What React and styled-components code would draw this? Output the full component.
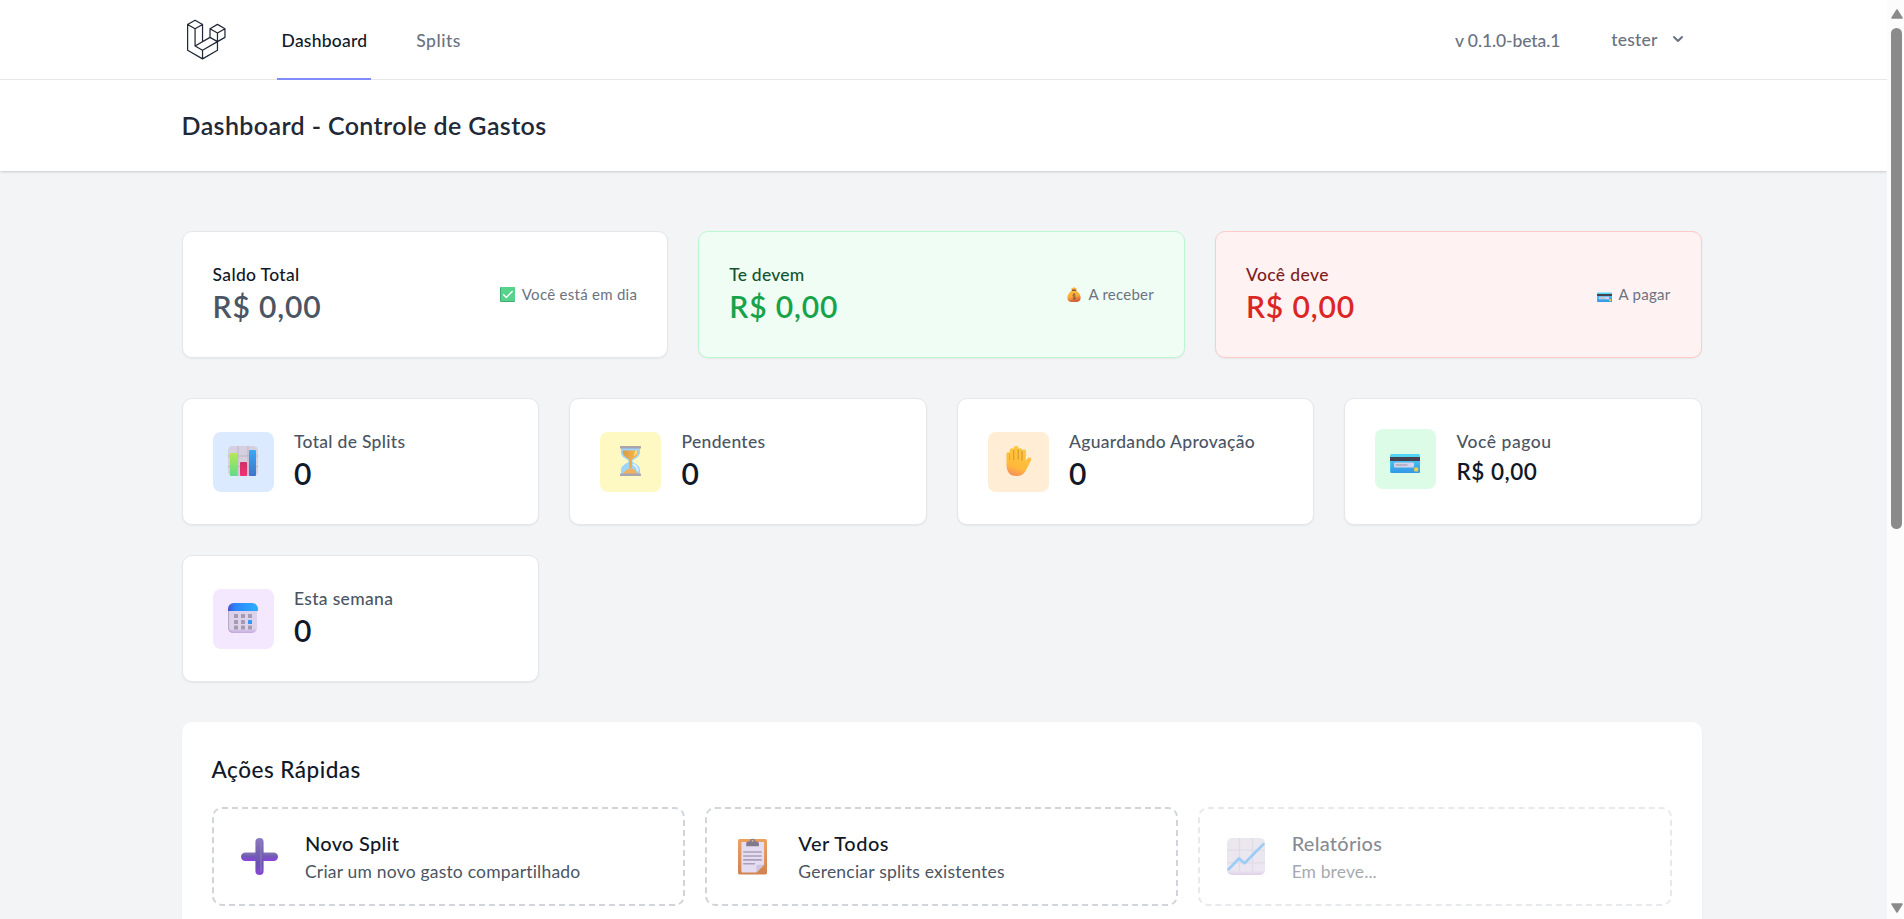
import React from "react";
import styled, { createGlobalStyle, css } from "styled-components";

const GlobalStyle = createGlobalStyle`
  *, *::before, *::after { box-sizing: border-box; }
  html, body { margin: 0; padding: 0; height: 100%; overflow: hidden; }
  body {
    background: #f3f4f6;
    font-family: Lato, "Open Sans", "Liberation Sans", sans-serif;
    color: #111827;
  }
  svg { display: block; flex: none; }
`;

/* size, line box and tracking of one line of text; lift raises it in its line box */
const type = (size, line, weight, lift = 0) => css`
  font-size: ${size}px;
  line-height: ${line - lift * 2}px;
  padding-bottom: ${lift * 2}px;
  font-weight: ${weight};
  letter-spacing: ${(p) => p.$track || 0}px;
  white-space: nowrap;
`;

const Screen = styled.div`
  display: flex;
  height: 919px;
  overflow: hidden;
`;

const Page = styled.div`
  width: 1887px;
  flex: none;
  overflow: hidden;
`;

const Container = styled.div`
  width: 1600px;
  margin-left: 141.6px;
  padding: 0 40px;
`;

const Nav = styled.nav`
  height: 80px;
  background: #fff;
  border-bottom: 1px solid #ececef;
`;

const NavRow = styled(Container)`
  display: flex;
  justify-content: space-between;
  height: 80px;
`;

const NavStart = styled.div`
  display: flex;
  gap: 40px;
`;

const Brand = styled.a`
  display: flex;
  width: 45px;
  margin-right: 10px;
  padding-top: 17px;
`;

const NavLink = styled.a`
  display: flex;
  align-items: center;
  padding: 3px 4px 0 5px;
  color: ${(p) => (p.$active ? "#111827" : "#6b7280")};
  border-bottom: 2px solid ${(p) => (p.$active ? "#818cf8" : "transparent")};
`;

const NavText = styled.span`
  ${type(17.5, 25, 500)}
`;

const NavEnd = styled.div`
  display: flex;
  align-items: center;
  padding-right: 14px;
  color: #6b7280;
`;

const UserButton = styled.div`
  display: flex;
  align-items: center;
  gap: 10px;
  margin: 0 0 2px 51px;
`;

const PageHeader = styled.header`
  height: 91.25px;
  padding: 30px 0;
  background: #fff;
  box-shadow: 0 1px 3px rgba(0, 0, 0, 0.13), 0 1px 2px -1px rgba(0, 0, 0, 0.13);
`;

const PageTitle = styled.h2`
  margin: 0;
  color: #1f2937;
  ${type(25, 31.25, 600)}
`;

const Main = styled.main`
  padding-top: 60px;
`;

const Grid = styled.div`
  display: grid;
  grid-template-columns: repeat(${(p) => p.$columns}, 1fr);
  gap: ${(p) => p.$gap || 30}px;
  margin-bottom: 40px;
`;

const tones = {
  plain: { bg: "#ffffff", line: "#e5e7eb", label: "#111827", value: "#4b5563" },
  green: { bg: "#f0fdf4", line: "#bbf7d0", label: "#14532d", value: "#16a34a" },
  red: { bg: "#fef2f2", line: "#fecaca", label: "#7f1d1d", value: "#dc2626" },
};

const Card = styled.div`
  height: 127px;
  padding: 30px;
  background: ${(p) => tones[p.$tone || "plain"].bg};
  border: 1px solid ${(p) => tones[p.$tone || "plain"].line};
  border-radius: 10px;
  box-shadow: 0 1px 2px rgba(0, 0, 0, 0.06);
`;

const BalanceRow = styled.div`
  display: flex;
  align-items: center;
  justify-content: space-between;
`;

const BalanceLabel = styled.div`
  color: ${(p) => tones[p.$tone].label};
  ${type(17.5, 25, 500)}
`;

const BalanceValue = styled.div`
  color: ${(p) => tones[p.$tone].value};
  ${type(30, 40, 600, 1)}
`;

const Note = styled.div`
  display: flex;
  align-items: center;
  gap: 7px;
  color: #6b7280;
`;

const NoteText = styled.span`
  ${type(15, 20, 400, 0.5)}
`;

const StatRow = styled.div`
  display: flex;
  align-items: center;
  gap: 20.4px;
`;

const StatIcon = styled.div`
  display: flex;
  align-items: flex-start;
  width: 61px;
  height: 60px;
  padding: 14px 15px;
  background: ${(p) => p.$bg};
  border-radius: 8px;
`;

const StatLabel = styled.div`
  color: #4b5563;
  ${type(17.5, 25, 500)}
`;

const StatValue = styled.div`
  ${type(30, 40, 600, 1)}
`;

const StatMoney = styled.div`
  ${type(22.5, 35, 600)}
`;

const Panel = styled.section`
  height: 400px;
  padding: 30px;
  background: #fff;
  border-radius: 10px;
  box-shadow: 0 1px 2px rgba(0, 0, 0, 0.05);
`;

const PanelTitle = styled.h3`
  margin: 0 0 20px;
  ${type(22.5, 35, 500)}
`;

const Action = styled.a`
  display: flex;
  align-items: center;
  height: 99px;
  padding: 20px;
  border: 2px dashed #d1d5db;
  border-radius: 10px;
  opacity: ${(p) => (p.$disabled ? 0.5 : 1)};
`;

const ActionIcon = styled.div`
  display: flex;
  justify-content: center;
  width: 51px;
  margin: 0 20.4px 1px 0;
`;

const ActionTitle = styled.div`
  ${type(20, 30, 500, 0.75)}
`;

const ActionText = styled.div`
  color: #4b5563;
  ${type(17.5, 25, 400)}
`;

const Scrollbar = styled.div`
  display: flex;
  flex-direction: column;
  align-items: center;
  width: 17px;
  height: 919px;
  padding: 9px 0 6px 2px;
  background: #fcfcfc;
`;

const Thumb = styled.div`
  width: 11px;
  height: 501px;
  margin: 9px 0 auto;
  border-radius: 6px;
  background: #8b8b8b;
`;

const Arrow = styled.svg`
  width: 12px;
  height: 10px;
  transform: ${(p) => (p.$down ? "rotate(180deg)" : "none")};
`;

function Logo() {
  return (
    <svg width="45" height="45" viewBox="0 0 316 316" fill="none" stroke="#1f2937" strokeWidth="8.7" strokeLinejoin="round" strokeLinecap="round">
      <path d="M39.4 52.5 91.8 22.2 144.2 52.5 91.8 82.7ZM39.4 52.5V233.6L144.2 294 249.1 233.6V112.5M91.8 82.7V203.4L144.2 233.6V294M144.2 233.6 249.1 173.1M144.2 52.5V173.1M91.8 203.4 196.7 142.9 249.1 173.1 301.6 142.9V82.3L249.1 52 196.7 82.3V142.9M196.7 82.3 249.1 112.5 301.6 82.3" />
    </svg>
  );
}

function Chevron() {
  return (
    <svg width="20" height="20" viewBox="0 0 20 20" fill="#6b7280">
      <path fillRule="evenodd" clipRule="evenodd" d="M5.293 7.293a1 1 0 011.414 0L10 10.586l3.293-3.293a1 1 0 111.414 1.414l-4 4a1 1 0 01-1.414 0l-4-4a1 1 0 010-1.414z" />
    </svg>
  );
}

function Check() {
  return (
    <svg width="15" height="15" viewBox="0 0 15 15">
      <rect width="15" height="15" rx="1" fill="#43aa74" />
      <rect x="1" width="14" height="14" rx="1" fill="#58d38b" />
      <path d="M3.6 7.7 6.3 10.4 12.2 4.4" fill="none" stroke="#fff" strokeWidth="1.4" strokeLinecap="round" strokeLinejoin="round" />
    </svg>
  );
}

function MoneyBag() {
  return (
    <svg width="14" height="15" viewBox="0 0 14 15">
      <defs>
        <linearGradient id="bag" x1="0" y1="0" x2="0.3" y2="1">
          <stop offset="0" stopColor="#ffc233" />
          <stop offset="0.6" stopColor="#f7a93c" />
          <stop offset="1" stopColor="#d9603a" />
        </linearGradient>
      </defs>
      <path d="M4.2 1 5.6 1.3 7 .1 8.4 1.3 9.8 1 9 3H5Z" fill="#ffb52e" />
      <path d="M5 3.6h4c2 1.3 4.6 4 4.6 7 0 3-1.3 4.3-3.6 4.3H4C1.7 14.9.4 13.6.4 10.6.4 7.6 3 4.9 5 3.6Z" fill="url(#bag)" />
      <rect x="4.6" y="2.6" width="4.8" height="1.4" rx=".7" fill="#8a5a3e" />
      <path d="M8.4 7.900C8 7.100 5.900 7.200 5.900 8.400c0 1.200 2.600 1.100 2.600 2.400 0 1.300-2.200 1.300-2.700.4M7.100 6.400v6.300" fill="none" stroke="#7a5038" strokeWidth=".75" strokeLinecap="round" />
    </svg>
  );
}

function CreditCard({ width }) {
  return (
    <svg width={width} height={width} viewBox="0 -3 30 30">
      <defs>
        <linearGradient id="cc" x1="0" y1="0" x2="0" y2="1">
          <stop offset="0" stopColor="#49c6f5" />
          <stop offset="1" stopColor="#3397e6" />
        </linearGradient>
      </defs>
      <rect y="8" width="30" height="19" rx="1.5" fill="#52d5f2" />
      <path d="M.5 13h29.500v12.500a1.500 1.500 0 0 1-1.500 1.500H2a1.500 1.500 0 0 1-1.500-1.500Z" fill="url(#cc)" />
      <rect y="11" width="30" height="4" fill="#46414f" />
      <rect x="4" y="16.5" width="20" height="5" rx="1" fill="#d6d3e8" />
      <path d="M5.500 19h12" stroke="#a29bb5" strokeWidth="1.2" />
      <rect x="24.2" y="21.5" width="4" height="4" rx=".8" fill="#f5cb3f" />
    </svg>
  );
}

function BarChart() {
  return (
    <svg width="30" height="30" viewBox="0 0 30 30">
      <defs>
        <linearGradient id="b1" x1="0" y1="0" x2="0" y2="1"><stop offset="0" stopColor="#b6e84e" /><stop offset="1" stopColor="#5fdc8b" /></linearGradient>
        <linearGradient id="b2" x1="0" y1="0" x2="0" y2="1"><stop offset="0" stopColor="#cf2f68" /><stop offset="1" stopColor="#ee3374" /></linearGradient>
        <linearGradient id="b3" x1="0" y1="0" x2="0" y2="1"><stop offset="0" stopColor="#35a9fa" /><stop offset="1" stopColor="#4173c7" /></linearGradient>
      </defs>
      <rect width="30" height="30" rx="4.5" fill="#d6cfdf" />
      <path d="M10 0V30M20 0V30M0 10H30M0 20.500H30" stroke="#bdb4c6" strokeWidth="1" />
      <rect x="2" y="7" width="7.5" height="23" rx="1" fill="url(#b1)" />
      <rect x="12" y="16" width="7" height="14" rx="1" fill="url(#b2)" />
      <rect x="21" y="4" width="7" height="26" rx="1" fill="url(#b3)" />
    </svg>
  );
}

function Hourglass() {
  return (
    <svg width="30" height="30" viewBox="0 0 30 30">
      <defs>
        <linearGradient id="sandTop" x1="0" y1="0" x2="1" y2="0"><stop offset="0" stopColor="#d79a4b" /><stop offset="1" stopColor="#ffbd3c" /></linearGradient>
      </defs>
      <path d="M6 2H25V6.500C25 11 20 12.500 17.500 14.500V16C20 17.500 25 19.500 25 24V28H6V24C6 19.500 11 17.500 13.500 16V14.500C11 12.500 6 11 6 6.500Z" fill="#9ed3fa" />
      <path d="M7.500 4.500H23.500C23.500 9.500 19.500 11.500 16.800 13.500V22H14.200V13.500C11.500 11.500 7.500 9.500 7.500 4.500Z" fill="url(#sandTop)" />
      <path d="M8.500 28C9 24.500 13 22.500 15.500 22.500S22 24.500 22.500 28Z" fill="#efb262" />
      <path d="M20.500 4.500 22 4.500C22 7.500 20.500 9 19 10Z" fill="#ffe6a8" />
      <path d="M18.500 18.500C21 20 22.500 22 22.800 24.500" stroke="#e0f3ff" strokeWidth="1.8" fill="none" strokeLinecap="round" />
      <rect x="5" width="21" height="2.6" rx=".6" fill="#a7a2ac" />
      <rect x="5" y="27.6" width="21" height="2.4" rx=".6" fill="#aaa6b0" />
    </svg>
  );
}

function Hand() {
  return (
    <svg width="30" height="30" viewBox="0 0 30 30">
      <defs>
        <linearGradient id="hand" x1="0.6" y1="0" x2="0.3" y2="1"><stop offset="0" stopColor="#ffc83a" /><stop offset="0.7" stopColor="#ffb93c" /><stop offset="1" stopColor="#f78f5a" /></linearGradient>
      </defs>
      <path d="M3.500 8.300C3.500 5.700 6.500 5.700 6.500 7.500L6.800 4.200C6.800 1.500 10.600 1.500 10.600 4V2C11 -.6 15.300 -.6 15.500 2V3.800C16 1.800 19 1.800 19.200 4.200V5C20 2.800 23 3.200 23 5.800L22.700 14.500 25 12C26.500 10.500 29 12 28 14C26.500 18 24.500 21 22.500 25C20.500 29 17 30 13.500 30C7.500 30 3.800 27 3.500 19Z" fill="url(#hand)" />
      <path d="M10.700 4V13.500M15.300 3.500V13M19 5V14" stroke="#d99a33" strokeWidth="1.2" strokeLinecap="round" />
      <path d="M6.700 7.500V14" stroke="#eda733" strokeWidth="1" strokeLinecap="round" />
    </svg>
  );
}

function Calendar() {
  const columns = [6, 13, 20];
  const rows = [11, 17, 22.5];
  return (
    <svg width="30" height="30" viewBox="0 0 30 30">
      <defs>
        <linearGradient id="cal"><stop offset="0" stopColor="#3f55d0" /><stop offset="0.25" stopColor="#2b86fb" /><stop offset="1" stopColor="#2caefc" /></linearGradient>
        <linearGradient id="calBody" x1="0" y1="0" x2="0" y2="1"><stop offset="0" stopColor="#dccfe8" /><stop offset="0.85" stopColor="#dfd3ec" /><stop offset="1" stopColor="#c6a7dd" /></linearGradient>
      </defs>
      <rect width="29" height="30" rx="5" fill="url(#calBody)" />
      <path d="M.6 8V25A4.500 4.500 0 0 0 5 29.500" fill="none" stroke="#b3a6bf" strokeWidth="1" />
      <path d="M0 8V6A6 6 0 0 1 6 0H24A6 6 0 0 1 30 6V8Z" fill="url(#cal)" />
      {rows.map((y) =>
        columns.map((x) => <rect key={`${x}-${y}`} x={x} y={y} width="4" height="4" rx=".6" fill={y === 17 && x === 20 ? "#3496f7" : "#a59bb1"} />)
      )}
    </svg>
  );
}

function Plus() {
  return (
    <svg width="37" height="37" viewBox="0 0 38 38">
      <defs>
        <linearGradient id="pv" x1="0" y1="0" x2="0" y2="1"><stop offset="0" stopColor="#8d7cc0" /><stop offset="0.4" stopColor="#7361ae" /><stop offset="0.75" stopColor="#6c50b3" /><stop offset="1" stopColor="#8c45dd" /></linearGradient>
        <linearGradient id="ph" x1="0" y1="0" x2="0" y2="1"><stop offset="0" stopColor="#8577b5" /><stop offset="0.45" stopColor="#7159b4" /><stop offset="1" stopColor="#8b42e0" /></linearGradient>
      </defs>
      <rect x="0" y="15" width="38" height="8.6" rx="4.3" fill="url(#ph)" />
      <rect x="14.8" y="0" width="8.4" height="38" rx="4.2" fill="url(#pv)" />
      <path d="M20.500 4V34" stroke="#8c7bc4" strokeWidth="1.6" strokeLinecap="round" opacity=".7" />
    </svg>
  );
}

function Clipboard() {
  return (
    <svg width="29" height="37" viewBox="0 0 30 38">
      <defs>
        <linearGradient id="board" x1="0" y1="0" x2="0" y2="1"><stop offset="0" stopColor="#eda160" /><stop offset="1" stopColor="#d18351" /></linearGradient>
      </defs>
      <rect y="1" width="30" height="36.5" rx="1.6" fill="url(#board)" />
      <path d="M3.500 4H27V27.500L19 35.500H4.500A1 1 0 0 1 3.500 34.500Z" fill="#e4dcf0" />
      <path d="M19 35.500V29A1.500 1.500 0 0 1 20.500 27.500H27Z" fill="#cfc3e0" />
      <path d="M6 14.300H24M6 18.500H24M6 22.500H24M6 26.500H17" stroke="#aa9fb8" strokeWidth="1.6" strokeLinecap="round" />
      <path d="M8.500 8.500V5.500A2 2 0 0 1 10.500 3.500H12.200A2.900 2.900 0 0 1 18 3.500H19.600A2 2 0 0 1 21.600 5.500V8.500Z" fill="#82798c" />
      <circle cx="15.1" cy="2.8" r="1" fill="#d8b59c" />
    </svg>
  );
}

function TrendChart() {
  return (
    <svg width="38" height="37" viewBox="0 0 38 38" preserveAspectRatio="none">
      <defs>
        <linearGradient id="trend" x1="0" y1="0" x2="0" y2="1"><stop offset="0" stopColor="#d8d1df" /><stop offset="0.88" stopColor="#dacfe4" /><stop offset="1" stopColor="#bd9fd2" /></linearGradient>
      </defs>
      <rect width="38" height="38" rx="5" fill="url(#trend)" />
      <path d="M12.500 0V37M25.500 0V37M0 12.500H38M0 25.500H38" stroke="#c3b8cc" strokeWidth="1.3" />
      <path d="M.8 33 12 21 17.500 26 37.200 5.500" fill="none" stroke="#3b9cf0" strokeWidth="2.8" strokeLinejoin="round" />
    </svg>
  );
}

const balances = [
  { tone: "plain", label: "Saldo Total", track: 0.33, note: "Você está em dia", noteTrack: 0.28, icon: <Check /> },
  { tone: "green", label: "Te devem", track: 0.22, note: "A receber", noteTrack: 0.24, icon: <MoneyBag /> },
  { tone: "red", label: "Você deve", track: 0.39, note: "A pagar", noteTrack: 0.28, icon: <CreditCard width={15} /> },
];

const stats = [
  { label: "Total de Splits", track: 0.3, value: "0", bg: "#dbeafe", icon: <BarChart /> },
  { label: "Pendentes", track: 0.32, value: "0", bg: "#fef9c3", icon: <Hourglass /> },
  { label: "Aguardando Aprovação", track: 0.31, value: "0", bg: "#ffedd5", icon: <Hand /> },
  { label: "Você pagou", track: 0.52, value: "R$ 0,00", money: true, bg: "#dcfce7", icon: <CreditCard width={30} /> },
  { label: "Esta semana", track: 0.33, value: "0", bg: "#f3e8ff", icon: <Calendar /> },
];

const actions = [
  { title: "Novo Split", track: 0.28, text: "Criar um novo gasto compartilhado", textTrack: 0.2, icon: <Plus /> },
  { title: "Ver Todos", track: 0.5, text: "Gerenciar splits existentes", textTrack: 0.22, icon: <Clipboard /> },
  { title: "Relatórios", track: 0.25, text: "Em breve...", textTrack: 0.11, icon: <TrendChart />, disabled: true },
];

function ScrollArrow({ down }) {
  return (
    <Arrow $down={down} viewBox="0 0 12 10">
      <path d="M6 1 11 9H1Z" fill="#8b8b8b" stroke="#8b8b8b" strokeWidth="1.5" strokeLinejoin="round" />
    </Arrow>
  );
}

export default function App() {
  return (
    <Screen>
      <GlobalStyle />
      <Page>
        <Nav>
          <NavRow>
            <NavStart>
              <Brand><Logo /></Brand>
              <NavLink $active><NavText $track={0.22}>Dashboard</NavText></NavLink>
              <NavLink><NavText $track={0.5}>Splits</NavText></NavLink>
            </NavStart>
            <NavEnd>
              <NavText $track={-0.1}>v 0.1.0-beta.1</NavText>
              <UserButton>
                <NavText $track={0.2}>tester</NavText>
                <Chevron />
              </UserButton>
            </NavEnd>
          </NavRow>
        </Nav>
        <PageHeader>
          <Container><PageTitle $track={0.38}>Dashboard - Controle de Gastos</PageTitle></Container>
        </PageHeader>
        <Main>
          <Container>
            <Grid $columns={3}>
              {balances.map((b) => (
                <Card key={b.label} $tone={b.tone}>
                  <BalanceRow>
                    <div>
                      <BalanceLabel $tone={b.tone} $track={b.track}>{b.label}</BalanceLabel>
                      <BalanceValue $tone={b.tone} $track={0.85}>R$ 0,00</BalanceValue>
                    </div>
                    <Note>{b.icon}<NoteText $track={b.noteTrack}>{b.note}</NoteText></Note>
                  </BalanceRow>
                </Card>
              ))}
            </Grid>
            <Grid $columns={4}>
              {stats.map((s) => (
                <Card key={s.label}>
                  <StatRow>
                    <StatIcon $bg={s.bg}>{s.icon}</StatIcon>
                    <div>
                      <StatLabel $track={s.track}>{s.label}</StatLabel>
                      {s.money ? <StatMoney $track={0.5}>{s.value}</StatMoney> : <StatValue>{s.value}</StatValue>}
                    </div>
                  </StatRow>
                </Card>
              ))}
            </Grid>
            <Panel>
              <PanelTitle $track={0.49}>Ações Rápidas</PanelTitle>
              <Grid $columns={3} $gap={20}>
                {actions.map((a) => (
                  <Action key={a.title} $disabled={a.disabled}>
                    <ActionIcon>{a.icon}</ActionIcon>
                    <div>
                      <ActionTitle $track={a.track}>{a.title}</ActionTitle>
                      <ActionText $track={a.textTrack}>{a.text}</ActionText>
                    </div>
                  </Action>
                ))}
              </Grid>
            </Panel>
          </Container>
        </Main>
      </Page>
      <Scrollbar>
        <ScrollArrow />
        <Thumb />
        <ScrollArrow down />
      </Scrollbar>
    </Screen>
  );
}
